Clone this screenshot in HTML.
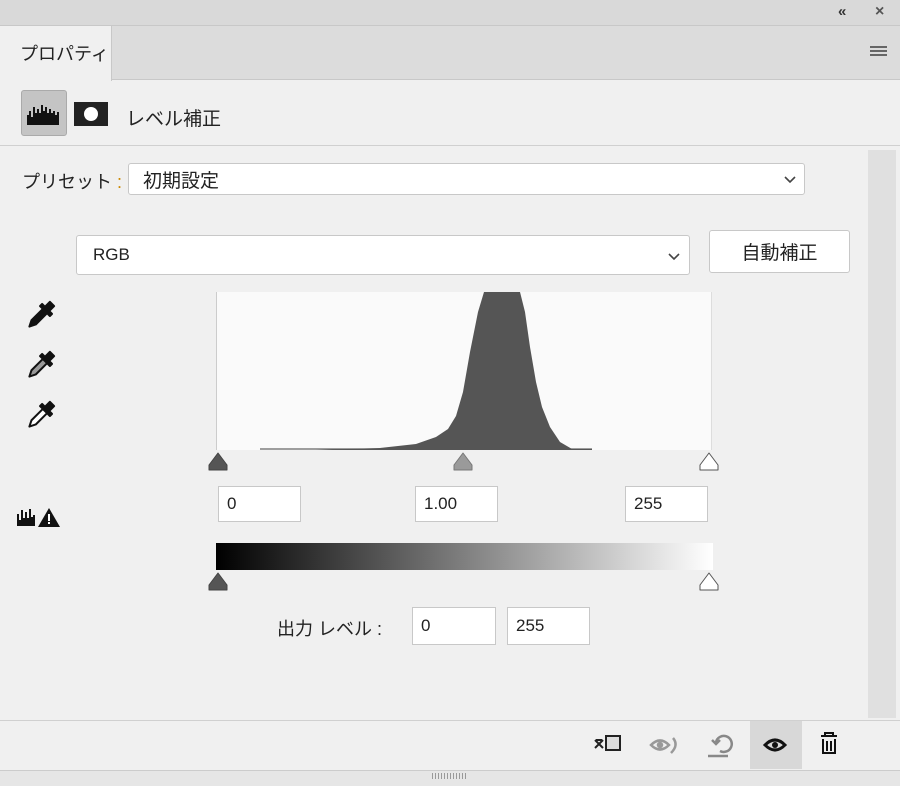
<!DOCTYPE html>
<html><head><meta charset="utf-8"><style>
*{margin:0;padding:0;box-sizing:border-box}
body{width:900px;height:786px;background:#f0f0f0;font-family:"Liberation Sans","Noto Sans CJK JP",sans-serif;color:#222;position:relative;overflow:hidden}
.a{position:absolute}
.box{position:absolute;background:#fff;border:1px solid #c8c8c8;font-size:17px;padding-left:8px;display:flex;align-items:center}
.t{position:absolute;font-size:19px;color:#222}
</style></head><body>
<div class="a" style="left:0;top:0;width:900px;height:26px;background:#d9d9d9;border-bottom:1px solid #c8c8c8"></div>
<div class="a" style="left:838px;top:3px;font-size:15px;font-weight:bold;color:#333">«</div>
<div class="a" style="left:875px;top:3px;font-size:16px;font-weight:bold;color:#555">×</div>
<div class="a" style="left:0;top:26px;width:900px;height:54px;background:#dcdcdc;border-bottom:1px solid #c8c8c8"></div>
<div class="a" style="left:0;top:26px;width:112px;height:55px;background:#f0f0f0;border-right:1px solid #c8c8c8"></div>
<div class="t" style="left:20px;top:40px;font-size:18px">プロパティ</div>
<div class="a" style="left:870px;top:46px;width:17px;height:2px;background:#666;box-shadow:0 4px 0 #666,0 8px 0 #666"></div>
<div class="a" style="left:21px;top:90px;width:46px;height:46px;background:#c4c4c4;border:1px solid #aaa;border-radius:3px"></div>
<svg class="a" style="left:27px;top:103px" width="34" height="22" viewBox="0 0 34 22"><path d="M0 22V12h2V8h2v6h2V4h2v6h2V6h2v4h2V2h2v6h2V4h2v6h2V6h2v4h2V8h2v4h2V9h2v13z" fill="#111"/></svg>
<div class="a" style="left:74px;top:102px;width:34px;height:24px;background:#222"></div>
<div class="a" style="left:84px;top:107px;width:14px;height:14px;background:#fff;border-radius:50%"></div>
<div class="t" style="left:126px;top:104px">レベル補正</div>
<div class="a" style="left:0;top:145px;width:900px;height:1px;background:#d0d0d0"></div>
<div class="a" style="left:868px;top:150px;width:28px;height:568px;background:#e0e0e0"></div>
<div class="t" style="left:22px;top:168px;font-size:18px">プリセット <span style="color:#c80">:</span></div>
<div class="box" style="left:128px;top:163px;width:677px;height:32px;border-radius:3px;padding-left:14px;font-size:19px">初期設定</div>
<svg class="a" style="left:783px;top:175px" width="14" height="9"><polyline points="2,2 7,7 12,2" fill="none" stroke="#444" stroke-width="1.6"/></svg>
<div class="box" style="left:76px;top:235px;width:614px;height:40px;border-radius:3px;padding-left:16px;font-size:17px">RGB</div>
<svg class="a" style="left:667px;top:252px" width="14" height="9"><polyline points="2,2 7,7 12,2" fill="none" stroke="#444" stroke-width="1.6"/></svg>
<div class="box" style="left:709px;top:230px;width:141px;height:43px;border-radius:3px;justify-content:center;padding:0;font-size:19px">自動補正</div>
<svg class="a" style="left:18px;top:296px" width="44" height="150" viewBox="0 0 44 150">
<g stroke="#111" stroke-width="2" stroke-linejoin="round">
<g transform="translate(22,20) rotate(45)"><rect x="-3" y="-17" width="6" height="7" fill="#111"/><rect x="-7" y="-10" width="14" height="3" fill="#111"/><path d="M-3 -7h6v16l-3 6l-3-6z" fill="#111"/></g>
<g transform="translate(22,70) rotate(45)"><rect x="-3" y="-17" width="6" height="7" fill="#111"/><rect x="-7" y="-10" width="14" height="3" fill="#111"/><path d="M-3 -7h6v16l-3 6l-3-6z" fill="#999"/></g>
<g transform="translate(22,120) rotate(45)"><rect x="-3" y="-17" width="6" height="7" fill="#111"/><rect x="-7" y="-10" width="14" height="3" fill="#111"/><path d="M-3 -7h6v16l-3 6l-3-6z" fill="#fff"/></g>
</g></svg>
<svg class="a" style="left:17px;top:506px" width="44" height="22" viewBox="0 0 44 22"><path d="M0 20V8h2v6h2V4h2v8h2V6h2v6h2V3h2v8h2V9h2v11z" fill="#111"/><path d="M32 2l11 19H21z" fill="#111"/><rect x="31" y="8" width="2" height="7" fill="#fff"/><rect x="31" y="16" width="2" height="2" fill="#fff"/></svg>
<div class="a" style="left:216px;top:292px;width:496px;height:158px;background:#fafafa;border-left:1px solid #ccc;border-right:1px solid #ddd"></div>
<svg class="a" style="left:216px;top:292px" width="496" height="160" viewBox="0 0 496 160">
<path d="M44 157H376" stroke="#666" stroke-width="1.2"/>
<path d="M100 158L164 156L200 152L220 145L232 137L240 124L247 100L254 60L262 20L268 0H304L309 20L314 55L320 90L326 115L334 135L344 150L356 157H376V158Z" fill="#555"/>
</svg>
<svg class="a" style="left:205px;top:450px" width="520" height="25" viewBox="0 0 520 25">
<path d="M13 3l9 12v5H4v-5z" fill="#555" stroke="#444" stroke-linejoin="round"/>
<path d="M258 3l9 12v5h-18v-5z" fill="#9a9a9a" stroke="#777" stroke-linejoin="round"/>
<path d="M504 3l9 12v5h-18v-5z" fill="#fff" stroke="#555" stroke-linejoin="round"/>
</svg>
<div class="box" style="left:218px;top:486px;width:83px;height:36px">0</div>
<div class="box" style="left:415px;top:486px;width:83px;height:36px">1.00</div>
<div class="box" style="left:625px;top:486px;width:83px;height:36px">255</div>
<div class="a" style="left:216px;top:543px;width:497px;height:27px;background:linear-gradient(to right,#000,#fff)"></div>
<svg class="a" style="left:205px;top:570px" width="520" height="25" viewBox="0 0 520 25">
<path d="M13 3l9 12v5H4v-5z" fill="#555" stroke="#444" stroke-linejoin="round"/>
<path d="M504 3l9 12v5h-18v-5z" fill="#fff" stroke="#555" stroke-linejoin="round"/>
</svg>
<div class="t" style="left:277px;top:615px;font-size:18px">出力 レベル :</div>
<div class="box" style="left:412px;top:607px;width:84px;height:38px">0</div>
<div class="box" style="left:507px;top:607px;width:83px;height:38px">255</div>
<div class="a" style="left:0;top:720px;width:900px;height:1px;background:#d0d0d0"></div>
<div class="a" style="left:750px;top:721px;width:52px;height:48px;background:#d8d8d8"></div>
<svg class="a" style="left:585px;top:728px" width="260" height="34" viewBox="0 0 260 34">
<rect x="21" y="8" width="14" height="14" fill="#ddd" stroke="#222" stroke-width="2"/>
<path d="M10 12l8 8M18 12l-8 8M11 12h6" stroke="#222" stroke-width="2"/>
<g fill="none" stroke="#999" stroke-width="2.5"><path d="M66 17q9-9 18 0q-9 9-18 0z"/><circle cx="75" cy="17" r="2" fill="#999"/><path d="M88 10q6 7-2 15"/></g>
<g fill="none" stroke="#888" stroke-width="2.5"><path d="M131 14a8 8 0 1 1 4 9"/><path d="M127 12l4 4 4-4"/><path d="M123 28h20"/></g>
<path d="M180 17q10-10 20 0q-10 10-20 0z" fill="none" stroke="#111" stroke-width="3"/><circle cx="190" cy="17" r="3" fill="#111"/>
<g stroke="#111" stroke-width="2" fill="none"><path d="M236 8h16M240 8V5h8v3"/><path d="M238 11v14h12V11"/><path d="M242 13v10M246 13v10"/></g>
</svg>
<div class="a" style="left:0;top:770px;width:900px;height:16px;background:#e6e6e6;border-top:1px solid #ccc"></div>
<div class="a" style="left:432px;top:773px;width:36px;height:6px;background:repeating-linear-gradient(to right,#999 0 1px,transparent 1px 3px)"></div>
</body></html>
